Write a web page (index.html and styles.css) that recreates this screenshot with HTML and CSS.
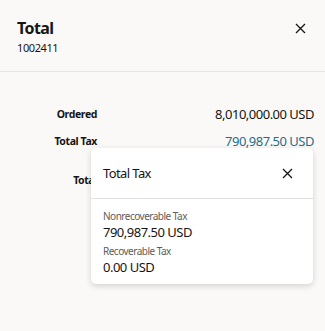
FILE: index.html
```html
<!DOCTYPE html>
<html>
<head>
<meta charset="utf-8">
<link rel="stylesheet" href="styles.css">
</head>
<body>
<div class="drawer">
  <header class="head">
    <div class="titles">
      <div class="title">Total</div>
      <div class="sub">1002411</div>
    </div>
    <button class="close" aria-label="Close">
      <svg width="11" height="11" viewBox="0 0 11 11"><path d="M1 1L10 10M10 1L1 10" stroke="#161513" stroke-width="1.3" fill="none"/></svg>
    </button>
  </header>
  <div class="body">
    <div class="row">
      <div class="label">Ordered</div>
      <div class="value">8,010,000.00 USD</div>
    </div>
    <div class="row">
      <div class="label">Total Tax</div>
      <div class="value link">790,987.50 USD</div>
    </div>
    <div class="row row-total">
      <div class="label">Total</div>
      <div class="value"></div>
    </div>
  </div>
  <div class="popup">
    <div class="pop-head">
      <div class="pop-title">Total Tax</div>
      <button class="close pop-close" aria-label="Close">
        <svg width="11" height="11" viewBox="0 0 11 11"><path d="M1 1L10 10M10 1L1 10" stroke="#161513" stroke-width="1.3" fill="none"/></svg>
      </button>
    </div>
    <div class="pop-body">
      <div class="item">
        <div class="item-label">Nonrecoverable Tax</div>
        <div class="item-value">790,987.50 USD</div>
      </div>
      <div class="item">
        <div class="item-label">Recoverable Tax</div>
        <div class="item-value">0.00 USD</div>
      </div>
    </div>
  </div>
</div>
</body>
</html>
```
FILE: styles.css
```css
html, body {
  margin: 0;
  padding: 0;
}
body {
  background: #faf9f8;
  font-family: "Noto Sans", sans-serif;
  color: #161513;
  width: 325px;
  height: 331px;
  overflow: hidden;
}
.drawer {
  position: relative;
  height: 331px;
}
.head {
  display: flex;
  justify-content: space-between;
  align-items: flex-start;
  height: 72px;
  box-sizing: border-box;
  padding: 17px 15px 0 17px;
  border-bottom: 1px solid #e7e5e3;
}
.title {
  font-size: 16px;
  font-weight: 700;
  line-height: 22px;
  letter-spacing: -0.6px;
}
.sub {
  font-size: 11px;
  line-height: 15px;
  margin-top: 1px;
  letter-spacing: -0.4px;
}
.close {
  border: 0;
  background: none;
  padding: 0;
  width: 20px;
  height: 20px;
  display: flex;
  align-items: center;
  justify-content: center;
  margin-top: 1px;
}
.body {
  padding: 28px 11px 0 0;
}
.row {
  display: grid;
  grid-template-columns: 97px 1fr;
  align-items: center;
  height: 27px;
}
.row-total {
  margin-top: 12px;
}
.label {
  font-size: 10.5px;
  font-weight: 700;
  text-align: right;
  letter-spacing: -0.4px;
}
.value {
  font-size: 13px;
  text-align: right;
  letter-spacing: -0.5px;
}
.link {
  color: #1d6f8d;
}
.popup {
  position: absolute;
  left: 91px;
  top: 148px;
  width: 222px;
  height: 136px;
  background: #fff;
  border-radius: 5px;
  box-shadow: 0 2px 6px rgba(0,0,0,0.16);
}
.pop-head {
  display: flex;
  justify-content: space-between;
  align-items: center;
  height: 51px;
  box-sizing: border-box;
  padding: 0 16px 0 12px;
  border-bottom: 1px solid #e4e2e0;
}
.pop-title {
  font-size: 13px;
  letter-spacing: -0.6px;
}
.pop-body {
  padding: 10px 12px 0 12px;
}
.item + .item {
  margin-top: 3px;
}
.item-label {
  font-size: 10px;
  color: #5e5b58;
  line-height: 14px;
  letter-spacing: -0.5px;
}
.item-value {
  font-size: 13px;
  line-height: 18px;
  letter-spacing: -0.5px;
}
```
